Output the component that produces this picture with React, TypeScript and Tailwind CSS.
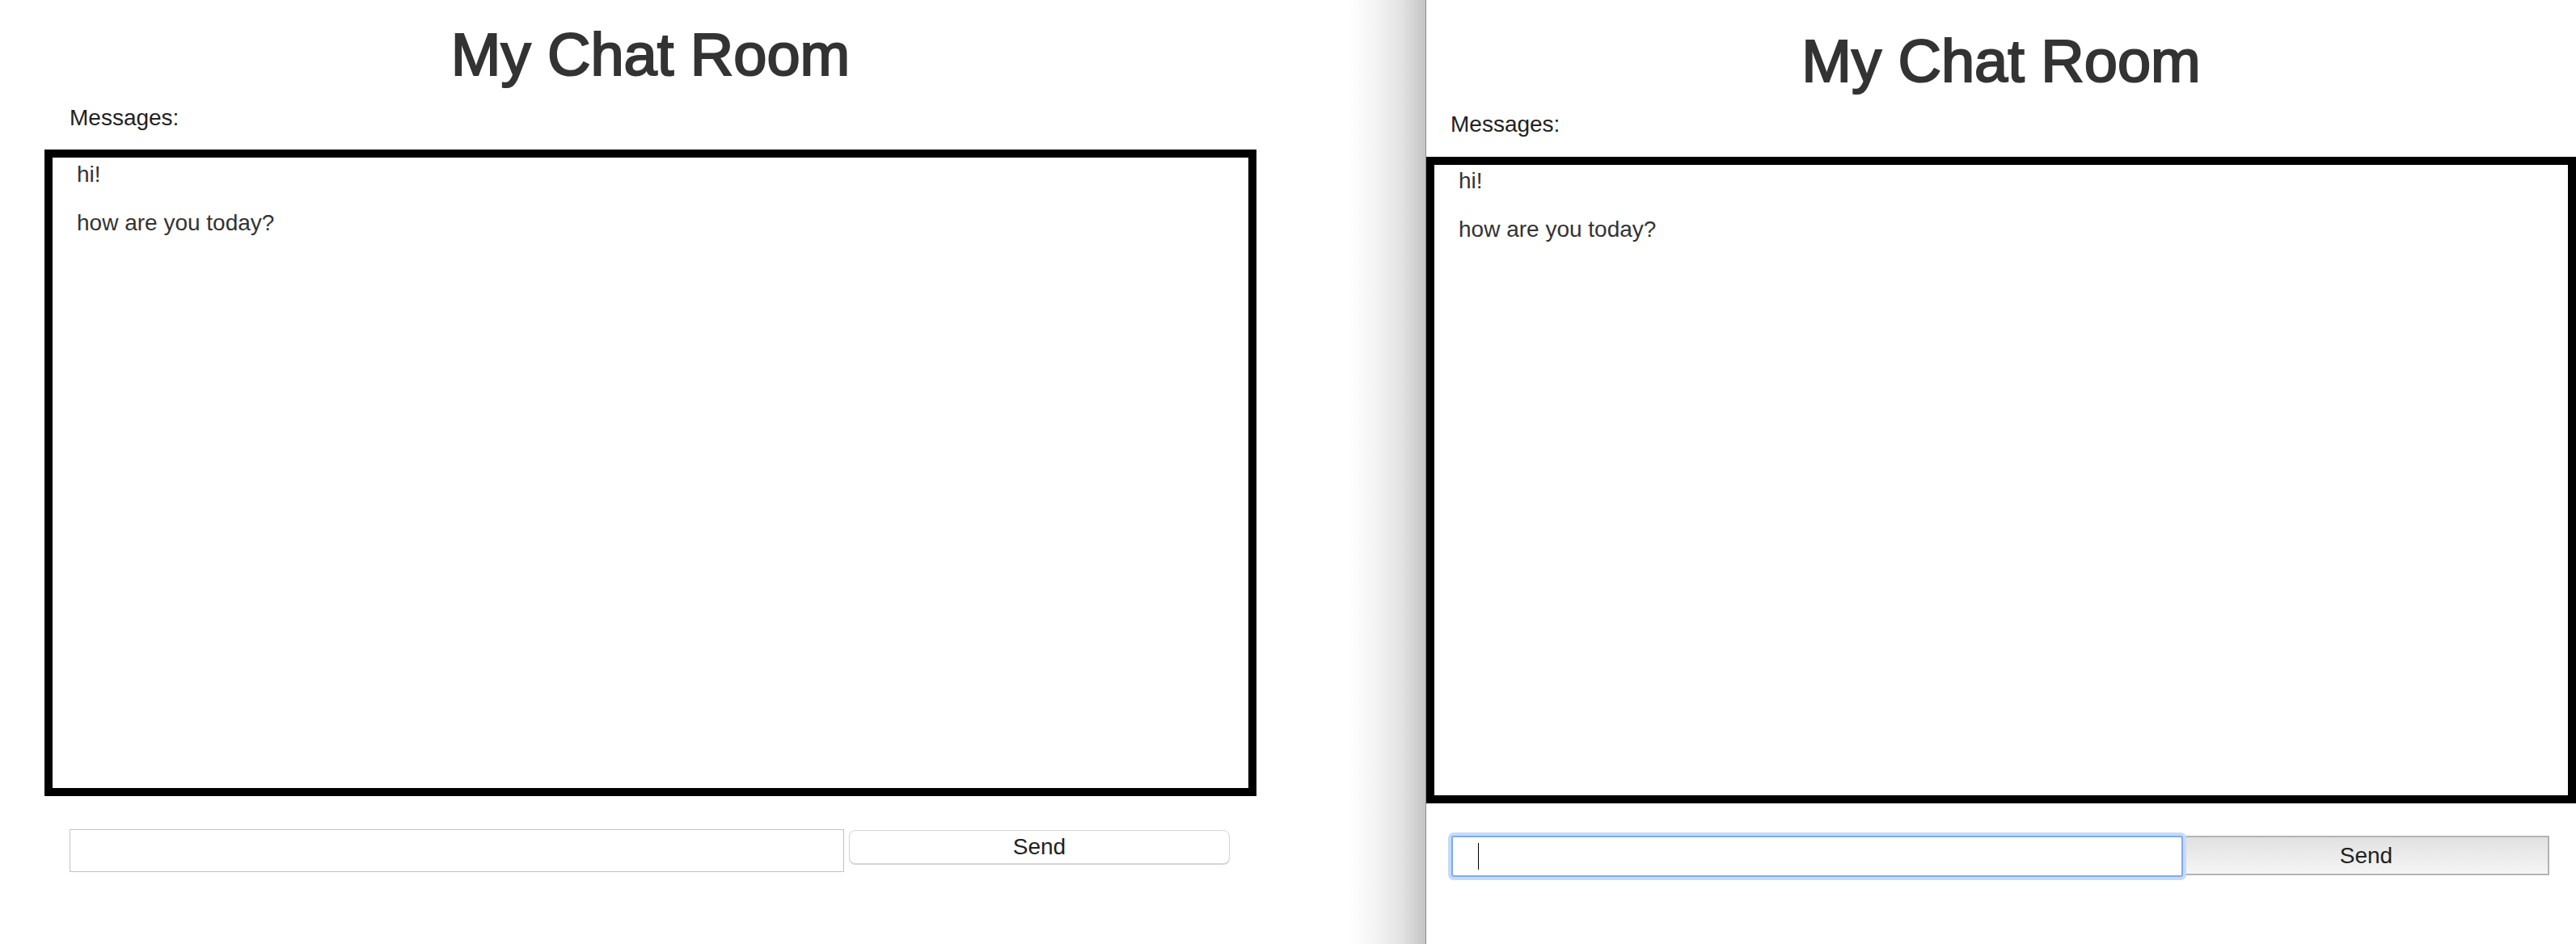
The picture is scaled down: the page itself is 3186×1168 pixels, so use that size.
import React from "react";

function ChatPanel({
  padTop,
  boxWidth,
  labelMt,
  labelPl,
  boxMt,
  msgPl,
  msgPt,
  focused,
}: {
  padTop: string;
  boxWidth: string;
  labelMt: string;
  labelPl: string;
  boxMt: string;
  msgPl: string;
  msgPt: string;
  focused: boolean;
}) {
  const messages = ["hi!", "how are you today?"];
  return (
    <div className={`${padTop} ${boxWidth} flex flex-col`}>
      <h1 className="h-[80px] text-center text-[74px] leading-[80px] font-normal text-[#333] [-webkit-text-stroke:2.2px_#333]">
        My Chat Room
      </h1>
      <div className={`${labelMt} ${labelPl} text-[28px] leading-[40px] text-[#222]`}>
        Messages:
      </div>
      <div className={`${boxMt} h-[800px] border-[10px] border-black bg-white ${msgPl} ${msgPt}`}>
        {messages.map((m) => (
          <p key={m} className="mb-[20px] text-[28px] leading-[40px] text-[#333]">
            {m}
          </p>
        ))}
      </div>
      {focused ? (
        <div className="mt-[40px] ml-[31px] flex items-start">
          <div className="relative flex h-[51px] w-[905px] items-center rounded-[3px] border-2 border-[#7faaf0] bg-white pl-[31px] shadow-[0_0_0_4px_#c6dbfa]">
            <span className="block h-[33px] w-px bg-black" />
          </div>
          <button className="flex h-[49px] w-[453px] items-center justify-center border-2 border-[#b3b3b3] bg-[linear-gradient(to_bottom,#e1e1e1,#f5f5f5)] text-[28px] leading-none text-[#222]">
            Send
          </button>
        </div>
      ) : (
        <div className="mt-[41px] ml-[31px] flex items-start">
          <div className="h-[53px] w-[958px] border border-[#c2c2c2] bg-white" />
          <button className="mt-[1px] ml-[6px] flex h-[42px] w-[471px] items-center justify-center rounded-[8px] border border-[#d6d6d6] bg-white text-[28px] leading-none text-[#222] shadow-[0_1px_1px_rgba(0,0,0,0.18)]">
            Send
          </button>
        </div>
      )}
    </div>
  );
}

export default function App() {
  return (
    <div className="flex h-[1168px] w-[3186px] overflow-hidden bg-white font-['Liberation_Sans',Arial,Helvetica,sans-serif]">
      <div className="w-[1668px] shrink-0 pl-[55px]">
        <ChatPanel
          padTop="pt-[28px]"
          boxWidth="w-[1499px]"
          labelMt="mt-[18px]"
          labelPl="pl-[31px]"
          boxMt="mt-[19px]"
          msgPl="pl-[30px]"
          msgPt="pt-[1px]"
          focused={false}
        />
      </div>
      <div className="h-full w-[95px] shrink-0 bg-[linear-gradient(to_right,#ffffff,#f4f4f4_35%,#e2e2e2_70%,#c4c4c4)]" />
      <div className="h-full w-px shrink-0 bg-[#8e8e8e]" />
      <div className="w-[1422px] shrink-0">
        <ChatPanel
          padTop="pt-[36px]"
          boxWidth="w-[1422px]"
          labelMt="mt-[18px]"
          labelPl="pl-[30px]"
          boxMt="mt-[20px]"
          msgPl="pl-[30px]"
          msgPt="pt-0"
          focused={true}
        />
      </div>
    </div>
  );
}
